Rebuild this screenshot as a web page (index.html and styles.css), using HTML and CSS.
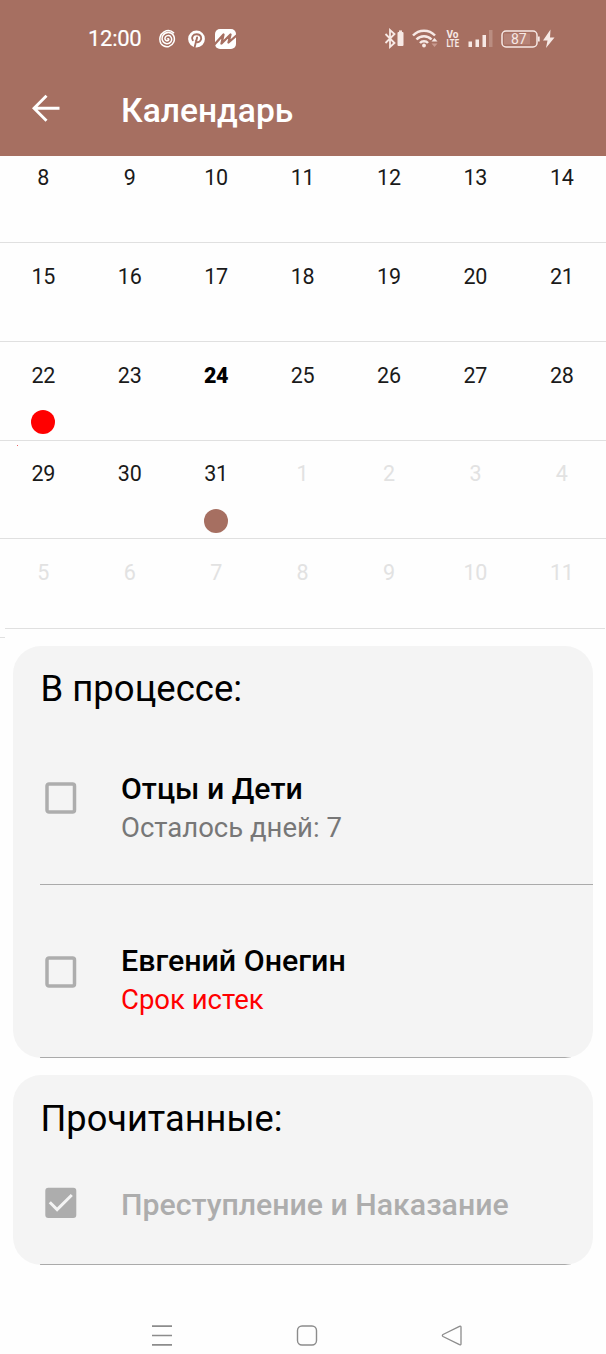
FILE: index.html
```
<!DOCTYPE html>
<html lang="ru">
<head>
<meta charset="utf-8">
<title>Календарь</title>
<link rel="stylesheet" href="styles.css">
</head>
<body>
<div class="screen">
  <header class="header">
    <div class="status">
      <span class="clock">12:00</span>
      <svg class="apps" width="78" height="22" viewBox="0 0 78 22" fill="none" stroke="#fff">
        <path stroke-width="1.500" stroke-linecap="round" d="M8.600 10.800c1-.6 1.600.8.700 1.500-1.600 1.200-3.700-.4-3.300-2.200.6-3.100 4.900-3.300 6.200-.6 1.600 3.500-1.400 6.600-4.600 6.200C3.500 15.200 2 10.700 4 7.300c2.500-4 8.500-3.800 10.600.3 2 4.200 0 9.200-4.600 10.800-3.400.8-6.300-.4-8-2.800C-.3 11.500 1 6 5 3.800c3.400-1.800 7.300-1.300 9.600 1"/>
        <circle cx="37.500" cy="11" r="8.400" fill="#fff" stroke="none"/>
        <path stroke="#a66f61" stroke-width="1.900" stroke-linecap="round" d="M33.800 12.300c-2-3 .2-6 3.900-6 4.600 0 5.400 4 3.600 6.500-1.400 2-4 1.700-4.500.1M38.100 9.500 35.800 18.500"/>
        <rect x="56" y="1" width="21" height="20" rx="5" fill="#fff" stroke="none"/>
        <path stroke="#a66f61" stroke-width="2.300" stroke-linejoin="round" d="M55 17 64.500 6.500 62.500 15.500 71.500 6.500 69.500 14.500 78 7"/>
      </svg>
      <svg class="system" width="172" height="22" viewBox="0 0 172 22" fill="none" stroke="#f7e9e5">
        <path stroke-width="1.800" d="m1.500 6 9 9-4.500 4V2l4.500 4-9 9"/>
        <rect x="13.500" y="4" width="6" height="14" rx="1" fill="#f7e9e5" stroke="none"/><path stroke-width="1.500" d="M15 3.200h3"/>
        <path stroke-width="2.500" d="M29 7.500c6-6.300 16-6.300 22 0M32.500 11.500c4-4.300 11-4.300 15 0M36 15c2-2.300 6-2.300 8 0"/>
        <circle cx="40" cy="17.500" r="1.900" fill="#f7e9e5" stroke="none"/>
        <path fill="#f7e9e5" stroke="none" d="m47.500 13.500 3-3.500 3 3.500z"/><path fill="#c99b90" stroke="none" d="m47.500 15.500 3 3.500 3-3.500z"/>
        <g fill="#f7e9e5" stroke="none"><path d="M84.500 13.500h3.500V19h-3.500zM91.500 11.500H95V19h-3.500zM98.500 7h3.500v12h-3.500z"/><path opacity=".25" d="M105 2h3.500v17H105z"/></g>
        <rect x="118" y="3" width="35" height="16" rx="4" stroke-width="1.500"/>
        <path stroke="none" fill="#b58276" d="M120 5.500h26v11h-26z"/>
        <path stroke-width="1.800" d="M154.800 8.500v5"/>
        <path fill="#f7e9e5" stroke="none" d="m166.500 1.500-7.500 11h4.500l-1.500 7.500 8.500-10.500H166z"/>
        <g class="system-text"><text class="volte" x="62.500" y="9.500" textLength="12" lengthAdjust="spacingAndGlyphs">Vo</text><text class="volte" x="62.500" y="19.200" textLength="12.500" lengthAdjust="spacingAndGlyphs">LTE</text><text class="level" x="127" y="16.200">87</text></g>
      </svg>
    </div>
    <div class="toolbar">
      <svg class="back" width="28" height="28" viewBox="0 0 28 28" fill="none" stroke="#fff" stroke-width="2.900"><path d="M27.500 14.200H2.500M14.500 1.700 2 14.200l12.500 12.500"/></svg>
      <h1 class="title">Календарь</h1>
    </div>
  </header>

  <main>
    <section class="calendar">
      <div class="week first"><span>8</span><span>9</span><span>10</span><span>11</span><span>12</span><span>13</span><span>14</span></div>
      <div class="week"><span>15</span><span>16</span><span>17</span><span>18</span><span>19</span><span>20</span><span>21</span></div>
      <div class="week"><span class="overdue">22</span><span>23</span><span class="today">24</span><span>25</span><span>26</span><span>27</span><span>28</span></div>
      <div class="week fourth"><span>29</span><span>30</span><span class="due">31</span><span class="other">1</span><span class="other">2</span><span class="other">3</span><span class="other">4</span><i class="speck"></i></div>
      <div class="week last"><span class="other">5</span><span class="other">6</span><span class="other">7</span><span class="other">8</span><span class="other">9</span><span class="other">10</span><span class="other">11</span></div>
      <div class="calendar-end"></div>
    </section>

    <section class="card">
      <h2 class="card-title">В процессе:</h2>
      <div class="book first-book">
        <svg class="check" width="32" height="32" viewBox="0 0 32 32"><rect x="2" y="2" width="27.500" height="28" rx="2" fill="none" stroke="#adadad" stroke-width="3.500"/></svg>
        <div class="info"><div class="name">Отцы и Дети</div><div class="note">Осталось дней: 7</div></div>
      </div>
      <div class="book second-book">
        <svg class="check" width="32" height="32" viewBox="0 0 32 32"><rect x="2" y="2" width="27.500" height="28" rx="2" fill="none" stroke="#adadad" stroke-width="3.500"/></svg>
        <div class="info"><div class="name name-wide">Евгений Онегин</div><div class="note expired">Срок истек</div></div>
      </div>
    </section>

    <section class="card done">
      <h2 class="card-title">Прочитанные:</h2>
      <div class="book done-book">
        <svg class="check" width="32" height="32" viewBox="0 0 32 32"><rect x=".3" y=".8" width="31" height="30.200" rx="3" fill="#adadad"/><path d="m4.800 15.300 7.300 7.300L26.800 8" fill="none" stroke="#f4f4f4" stroke-width="3"/></svg>
        <div class="info"><div class="name muted">Преступление и Наказание</div></div>
      </div>
    </section>
  </main>

  <nav class="navbar">
    <svg width="22" height="22" viewBox="0 0 22 22" fill="none" stroke="#8c8c8c" stroke-width="1.700"><path d="M1 1.200h20M1 10.500h20M1 19.800h20"/></svg>
    <svg width="22" height="22" viewBox="0 0 22 22" fill="none" stroke="#8c8c8c" stroke-width="1.400"><rect x="1.500" y="1" width="19" height="19" rx="4.500"/></svg>
    <svg width="22" height="22" viewBox="0 0 22 22" fill="none" stroke="#8c8c8c" stroke-width="1.300" stroke-linejoin="round"><path d="M2 9.500Q.7 10.500 2 11.500l16.500 8.200q1.500.5 1.500-1V2.300q0-1.500-1.500-1z"/></svg>
  </nav>
</div>
</body>
</html>
```
FILE: styles.css
```
* { box-sizing: border-box; }
body { margin: 0; background: #fefefe; font-family: Roboto, "Noto Sans", sans-serif; color: #000; }
svg { display: block; flex: none; }
.screen { width: 606px; height: 1354px; overflow: hidden; display: flex; flex-direction: column; }
.header { height: 156px; flex: none; background: #a66f61; color: #fff; }
.status { height: 61px; padding: 16px 0 0 88px; display: flex; align-items: center; }
.clock { width: 71px; padding-top: 1px; font-size: 22px; line-height: 26px; letter-spacing: -.3px; -webkit-text-stroke: .2px #fff; }
.system { margin-left: 147px; }
.system-text { fill: #f7e9e5; stroke: none; }
.volte { font-size: 10px; font-weight: 700; }
.level { font-size: 14px; }
.toolbar { display: flex; height: 94px; padding-left: 32px; align-items: center; }
.title { margin: 6px 0 0 61px; font-size: 33.600px; font-weight: 500; line-height: 40px; }
.calendar { width: 606px; height: 482px; }
.week { display: grid; grid-template-columns: repeat(7, 86.430px); position: relative; height: 99px; padding-top: 20px; border-bottom: 1px solid #e0e0e0; font-size: 21.500px; line-height: 28px; letter-spacing: -.3px; color: #1a1a1a; text-align: center; }
.first { height: 87px; padding-top: 8px; }
.fourth { height: 98px; padding-top: 19px; }
.last { height: 90px; width: 600px; margin-left: 5px; padding-top: 19.500px; grid-template-columns: 81.430px repeat(6, 86.430px); }
.last span:first-child { margin-left: -5px; }
.other { color: #e2e2e2; }
.today { font-weight: 900; color: #000; }
.overdue::after, .due::after { content: ""; display: block; width: 24px; height: 24px; margin: 20px auto 0; border-radius: 50%; background: #f00; }
.due::after { margin-top: 21px; background: #a66f61; }
.speck { position: absolute; left: 17px; top: 4px; width: 1px; height: 1px; background: #e66; }
.calendar-end { width: 5px; height: 9px; border-bottom: 1px solid #e0e0e0; }
.card { width: 580px; height: 412px; margin: 8px 0 0 13px; padding: 22px 0 0 27px; border-radius: 28px; background: #f4f4f4; overflow: hidden; }
.card-title { margin: 0; height: 42px; padding-left: .5px; font-size: 36.500px; font-weight: 400; line-height: 42px; }
.book { display: flex; border-bottom: 1px solid #aaa; padding-left: 5px; }
.info { margin-left: 44px; }
.first-book { height: 175px; padding-top: 58px; }
.second-book { height: 173px; padding-top: 55px; }
.first-book .check { margin-top: 14px; }
.second-book .check { margin-top: 16px; }
.name { font-size: 30.250px; font-weight: 500; line-height: 42px; white-space: nowrap; }
.name-wide { font-size: 30.400px; }
.note { font-size: 27.500px; line-height: 36px; color: #777; white-space: nowrap; }
.expired { color: #f00; }
.muted { color: #adadad; }
.done { height: 190px; margin-top: 17px; }
.done .card-title { padding-top: 1px; font-size: 36.200px; }
.done-book { height: 126px; padding-top: 44px; }
.done-book .check { margin-top: 4px; }
.done-book .info { padding-top: 1px; }
.navbar { margin: 60px 0 0 151px; display: flex; gap: 123px; }
```
